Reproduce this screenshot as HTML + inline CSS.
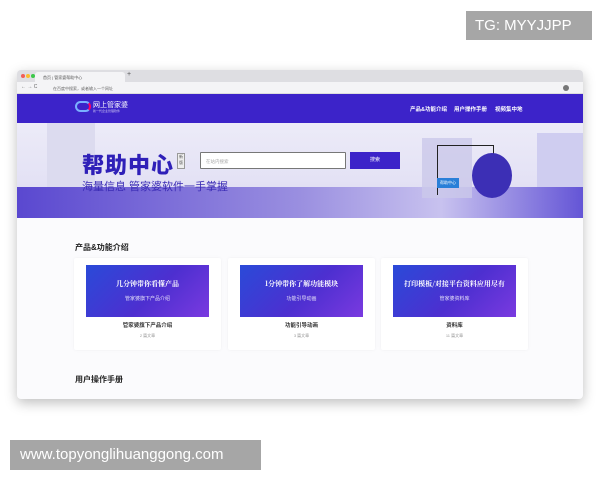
<!DOCTYPE html>
<html><head><meta charset="utf-8"><style>
*{margin:0;padding:0;box-sizing:border-box}
body{width:600px;height:480px;background:#fff;position:relative;overflow:hidden;font-family:"Liberation Sans","Noto Sans CJK SC",sans-serif}
.wm{position:absolute;background:#a6a6a6;color:#fff;font-size:15px;line-height:30px}
.win{position:absolute;left:17px;top:70px;width:566px;height:329px;background:#fbfbfd;border-radius:4px;box-shadow:0 4px 12px rgba(0,0,0,.25);overflow:hidden}
.tabs{height:12px;background:#dedee2;position:relative}
.tab{position:absolute;left:18px;top:2px;width:90px;height:10px;background:#f4f4f6;border-radius:3px 3px 0 0;font-size:4px;color:#555;padding:3px 0 0 8px}
.dot{position:absolute;top:4px;width:4px;height:4px;border-radius:50%}
.addr{height:12px;background:#f4f4f6;position:relative;font-size:4px;color:#666;padding:4px 0 0 36px;border-bottom:1px solid #ddd}
.nav{height:29px;background:#3c23c9;position:relative;color:#fff}
.nav .m{position:absolute;top:11px;font-size:5.5px;font-weight:bold}
.hero{height:95px;position:relative;background:linear-gradient(180deg,#ecebf8 0,#e4e2f5 60%,#d9d6f0 100%);overflow:hidden}
.band{position:absolute;left:0;right:0;top:64px;height:31px;background:linear-gradient(90deg,#5a48d0,#9a8fe0 50%,#c8c2ef 75%,#6455d6)}
.card{position:absolute;top:188px;width:147px;height:92px;background:#fff;border-radius:2px;box-shadow:0 0 3px rgba(0,0,0,.05)}
.ban{position:absolute;left:12px;top:7px;width:123px;height:52px;background:linear-gradient(135deg,#2a4ad8,#4d2fd0 55%,#7a3ae0);color:#fff;text-align:center}
.ban b{display:block;font-size:7px;margin-top:14px;font-family:"Noto Serif CJK SC",serif}
.ban i{display:block;font-style:normal;font-size:5px;margin-top:6px;opacity:.85}
.ct{position:absolute;top:63px;width:100%;text-align:center;font-size:5.5px;font-weight:bold;color:#333}
.cs{position:absolute;top:75px;width:100%;text-align:center;font-size:4px;color:#999}
</style></head><body>
<div class="wm" style="left:466px;top:11px;width:126px;height:29px;padding-left:9px">TG: MYYJJPP</div>
<div class="wm" style="left:10px;top:440px;width:251px;height:30px;padding-left:10px">www.topyonglihuanggong.com</div>
<div class="win">
 <div class="tabs"><span class="dot" style="left:4px;background:#f25f58"></span><span class="dot" style="left:9px;background:#fbbe2e"></span><span class="dot" style="left:14px;background:#3cc84a"></span><div class="tab">首页 | 管家婆帮助中心</div><span style="position:absolute;left:110px;top:1px;font-size:7px;color:#555">+</span></div>
 <div class="addr">在百度中搜索，或者输入一个网址<span style="position:absolute;left:4px;top:2px;font-size:5px">← → C</span><span style="position:absolute;right:14px;top:3px;width:6px;height:6px;border-radius:50%;background:#777"></span></div>
 <div class="nav">
  <div style="position:absolute;left:58px;top:7px;width:16px;height:11px;border:2px solid #7ab0ff;border-radius:6px;border-right-color:#f06"></div>
  <div style="position:absolute;left:76px;top:6px;font-size:7px">网上管家婆</div>
  <div style="position:absolute;left:76px;top:15px;font-size:3px;opacity:.7">新一代企业管理软件</div>
  <span class="m" style="left:393px">产品&amp;功能介绍</span><span class="m" style="left:437px">用户操作手册</span><span class="m" style="left:478px">视频集中地</span>
 </div>
 <div class="hero">
  <div style="position:absolute;left:30px;top:0;width:48px;height:95px;background:#dcdbef"></div>
  <div style="position:absolute;left:520px;top:10px;width:46px;height:85px;background:#cfcdf0"></div>
  <div class="band"></div>
  <div style="position:absolute;left:65px;top:25px;font-size:22px;font-weight:900;color:#2f20b8;letter-spacing:1px">帮助中心</div>
  <div style="position:absolute;left:160px;top:30px;width:8px;height:16px;border:1px solid #999;font-size:4px;color:#555;text-align:center;background:#eee">新版</div>
  <div style="position:absolute;left:65px;top:55px;font-size:11px;color:#3a2bb5">海量信息 管家婆软件一手掌握</div>
  <div style="position:absolute;left:183px;top:29px;width:146px;height:17px;background:#fff;border:1px solid #777;border-radius:1px;font-size:4.5px;color:#aaa;padding:6px 0 0 5px">在站内搜索</div>
  <div style="position:absolute;left:333px;top:29px;width:50px;height:17px;background:#3c23c9;color:#fff;font-size:5px;text-align:center;line-height:17px">搜索</div>
  <div style="position:absolute;left:405px;top:15px;width:50px;height:60px;background:#cbc8ea;opacity:.8"></div>
  <div style="position:absolute;left:420px;top:22px;width:57px;height:50px;border:1.5px solid #222;border-bottom:none"></div>
  <div style="position:absolute;left:455px;top:30px;width:40px;height:45px;border-radius:50%;background:#3c2fb5"></div>
  <div style="position:absolute;left:420px;top:55px;width:22px;height:10px;background:#2a7fd8;color:#fff;font-size:4px;text-align:center;line-height:10px">帮助中心</div>
 </div>
 <div style="position:absolute;left:58px;top:172px;font-size:8px;font-weight:bold;color:#222">产品&amp;功能介绍</div>
 <div class="card" style="left:57px"><div class="ban"><b>几分钟带你看懂产品</b><i>管家婆旗下产品介绍</i></div><div class="ct">管家婆旗下产品介绍</div><div class="cs">2 篇文章</div></div>
 <div class="card" style="left:211px"><div class="ban"><b>1分钟带你了解功能模块</b><i>功能引导动画</i></div><div class="ct">功能引导动画</div><div class="cs">3 篇文章</div></div>
 <div class="card" style="left:364px"><div class="ban"><b>打印模板/对接平台资料应用尽有</b><i>管家婆资料库</i></div><div class="ct">资料库</div><div class="cs">11 篇文章</div></div>
 <div style="position:absolute;left:58px;top:304px;font-size:8px;font-weight:bold;color:#222">用户操作手册</div>
</div>
</body></html>
